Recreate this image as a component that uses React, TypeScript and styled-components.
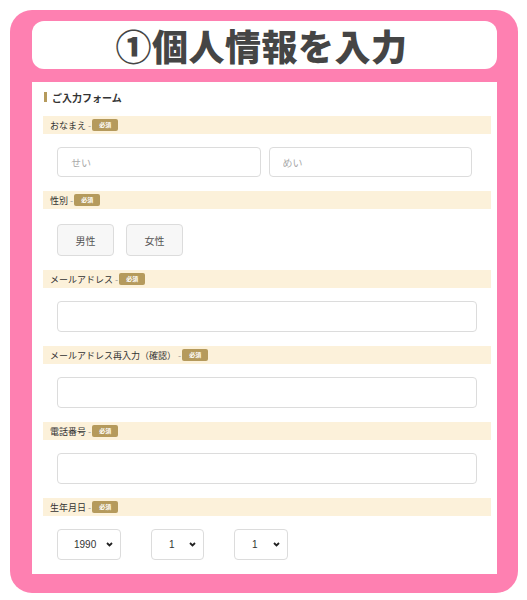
import React from 'react';
import styled, { createGlobalStyle } from 'styled-components';

const GlobalStyle = createGlobalStyle`
  * { box-sizing: border-box; }
  body {
    margin: 0;
    background: #ffffff;
    font-family: "Noto Sans CJK JP", "Noto Sans", sans-serif;
  }
`;

const Frame = styled.div`
  width: 508px;
  height: 583px;
  margin: 10px 0 0 10px;
  background: #fe80b1;
  border-radius: 22px;
  padding: 11px 21px 19px 22px;
  display: flex;
  flex-direction: column;
  gap: 13px;
`;

const TitleBox = styled.div`
  height: 48px;
  background: #ffffff;
  border-radius: 12px;
  display: flex;
  align-items: center;
  justify-content: center;
  padding-right: 6px;
`;

const Title = styled.h1`
  margin: 0;
  font-size: 36px;
  font-weight: 900;
  color: #454545;
  letter-spacing: 0.5px;
  line-height: 1;
`;

const Panel = styled.div`
  flex: 1;
  background: #ffffff;
  padding: 8px 6px 0 11px;
`;

const Heading = styled.h2`
  margin: 0 0 12px 1px;
  height: 14px;
  display: flex;
  align-items: center;
  gap: 5px;
  font-size: 10px;
  font-weight: 700;
  color: #333;

  &::before {
    content: '';
    width: 3px;
    height: 10px;
    background: #b59a5c;
  }
`;

const LabelBar = styled.div`
  height: 18px;
  background: #fcf1da;
  display: flex;
  align-items: center;
  padding-left: 7px;
  font-size: 9px;
  color: #333;
`;

const Dash = styled.span`
  color: #999;
  margin: 0 1px 0 2px;
`;

const Badge = styled.span`
  background: #b59a5c;
  color: #fff;
  font-size: 6px;
  font-weight: 700;
  line-height: 12px;
  height: 12px;
  padding: 0 7px;
  border-radius: 2px;
`;

const FieldBody = styled.div<{ $top?: number }>`
  padding: ${p => p.$top ?? 13}px 14px 14px;
  display: flex;
  gap: 8px;
`;

const TextInput = styled.input<{ $h?: number }>`
  flex: 1;
  min-width: 0;
  height: ${p => p.$h ?? 31}px;
  border: 1px solid #dcdcdc;
  border-radius: 4px;
  padding: 0 13px;
  font-family: inherit;
  font-size: 10px;
  color: #333;
  background: #fff;
  outline: none;

  &::placeholder {
    color: #aaa;
  }
`;

const NameRow = styled.div`
  flex: 1;
  display: flex;
  gap: 8px;
  padding-right: 5px;
`;

const ChoiceButton = styled.button`
  width: 57px;
  height: 32px;
  margin-right: 4px;
  background: #f7f7f7;
  border: 1px solid #dcdcdc;
  border-radius: 4px;
  font-family: inherit;
  font-size: 10px;
  color: #555;
  cursor: pointer;
`;

const SelectWrap = styled.div<{ $w: number }>`
  position: relative;
  width: ${p => p.$w}px;
  height: 31px;
  margin-right: 22px;
`;

const Select = styled.select<{ $pl: number }>`
  appearance: none;
  width: 100%;
  height: 100%;
  border: 1px solid #dcdcdc;
  border-radius: 4px;
  background: #fff;
  padding: 0 0 0 ${p => p.$pl}px;
  font-family: "Liberation Sans", Arial, sans-serif;
  font-size: 10px;
  color: #333;
  outline: none;
`;

const Chevron = styled.svg`
  position: absolute;
  right: 8px;
  top: 13px;
  pointer-events: none;
`;

const Required = () => (
  <>
    <Dash>-</Dash>
    <Badge>必須</Badge>
  </>
);

const Label = ({ children }: { children: React.ReactNode }) => (
  <LabelBar>
    {children}
    <Required />
  </LabelBar>
);

const DateSelect = ({ w, pl, value, options }: { w: number; pl: number; value: string; options: string[] }) => (
  <SelectWrap $w={w}>
    <Select $pl={pl} defaultValue={value}>
      {options.map(o => (
        <option key={o} value={o}>{o}</option>
      ))}
    </Select>
    <Chevron width="7" height="5" viewBox="0 0 7 5">
      <path d="M1 1 L3.5 3.5 L6 1" fill="none" stroke="#222" strokeWidth="1.8" />
    </Chevron>
  </SelectWrap>
);

const years = Array.from({ length: 60 }, (_, i) => String(1960 + i));
const months = Array.from({ length: 12 }, (_, i) => String(i + 1));
const days = Array.from({ length: 31 }, (_, i) => String(i + 1));

export default function App() {
  return (
    <>
      <GlobalStyle />
      <Frame>
        <TitleBox>
          <Title>①個人情報を入力</Title>
        </TitleBox>
        <Panel>
          <Heading>ご入力フォーム</Heading>

          <Label>おなまえ</Label>
          <FieldBody>
            <NameRow>
              <TextInput $h={30} placeholder="せい" />
              <TextInput $h={30} placeholder="めい" />
            </NameRow>
          </FieldBody>

          <Label>性別</Label>
          <FieldBody $top={15}>
            <ChoiceButton>男性</ChoiceButton>
            <ChoiceButton>女性</ChoiceButton>
          </FieldBody>

          <Label>メールアドレス</Label>
          <FieldBody>
            <TextInput />
          </FieldBody>

          <Label>メールアドレス再入力（確認）</Label>
          <FieldBody>
            <TextInput />
          </FieldBody>

          <Label>電話番号</Label>
          <FieldBody>
            <TextInput />
          </FieldBody>

          <Label>生年月日</Label>
          <FieldBody>
            <DateSelect w={64} pl={16} value="1990" options={years} />
            <DateSelect w={53} pl={17} value="1" options={months} />
            <DateSelect w={54} pl={17} value="1" options={days} />
          </FieldBody>
        </Panel>
      </Frame>
    </>
  );
}
